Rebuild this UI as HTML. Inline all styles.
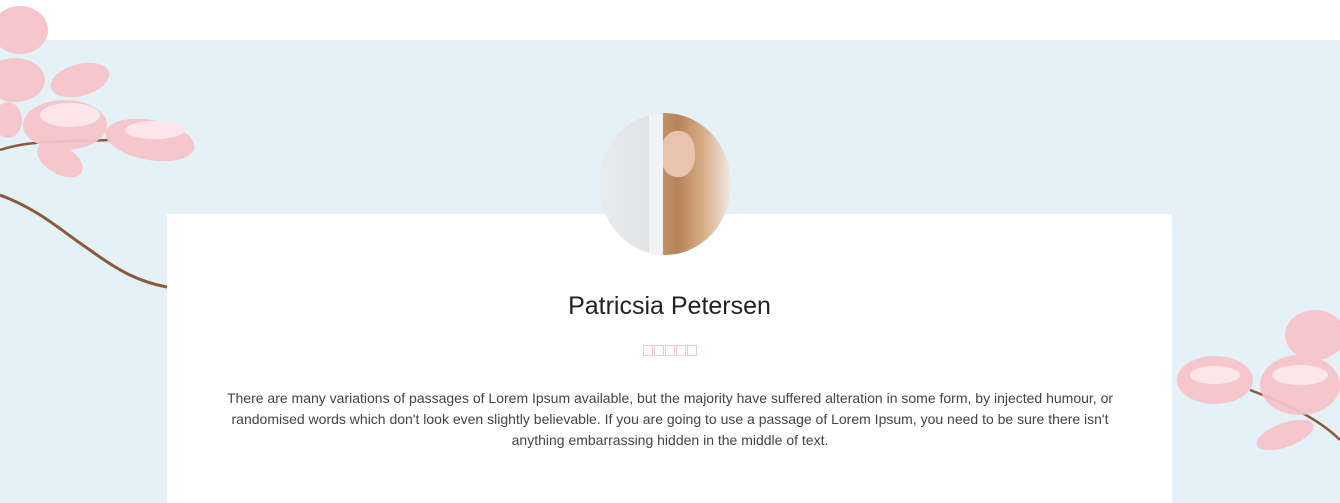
<!DOCTYPE html>
<html><head><meta charset="utf-8"><style>
html,body{margin:0;padding:0;width:1340px;height:503px;overflow:hidden;background:#fff;font-family:"Liberation Sans",sans-serif}
.band{position:absolute;left:0;top:40px;width:1340px;height:463px;background:#e4f2f8}
.card{position:absolute;left:167px;top:214px;width:1005px;height:289px;background:#fff}
.av{position:absolute;left:599px;top:113px;width:132px;height:142px;border-radius:50%;overflow:hidden;background:linear-gradient(90deg,#e9ecef 0%,#dfe3e6 38%,#c99a73 40%,#b8835a 60%,#d9b08a 80%,#efe9e4 100%)}
h2{position:absolute;left:167px;width:1005px;top:292px;margin:0;text-align:center;font-weight:normal;font-size:25px;color:#222}
.st{position:absolute;left:643px;top:345px;display:flex;gap:1px}
.st i{display:block;width:8px;height:9px;border:1px solid #f0c8c8}
p{position:absolute;left:215px;width:910px;top:388px;margin:0;text-align:center;font-size:14px;line-height:21px;color:#444}
svg{position:absolute}
</style></head><body>
<div class="band"></div>
<div class="card"></div>
<div class="av">
<div style="position:absolute;left:62px;top:18px;width:34px;height:46px;border-radius:45%;background:#e8c4ae"></div>
<div style="position:absolute;left:50px;top:0;width:14px;height:142px;background:#f2f3f4"></div>
</div>
<svg width="200" height="300" style="left:0;top:0">
<path d="M0 195 C40 210 60 230 90 250 C120 272 140 282 167 287" stroke="#8a5a3c" stroke-width="3" fill="none"/>
<path d="M0 150 C30 140 60 142 110 140" stroke="#8a5a3c" stroke-width="2.5" fill="none"/>
<g fill="#f6c4ca" opacity=".95">
<ellipse cx="20" cy="30" rx="28" ry="24"/><ellipse cx="15" cy="80" rx="30" ry="22"/>
<ellipse cx="80" cy="80" rx="30" ry="16" transform="rotate(-15 80 80)"/>
<ellipse cx="65" cy="125" rx="42" ry="25"/><ellipse cx="60" cy="160" rx="25" ry="14" transform="rotate(30 60 160)"/>
<ellipse cx="150" cy="140" rx="45" ry="20" transform="rotate(10 150 140)"/>
<ellipse cx="8" cy="120" rx="14" ry="18"/>
</g>
<g fill="#fce6e9"><ellipse cx="70" cy="115" rx="30" ry="12"/><ellipse cx="155" cy="130" rx="30" ry="9"/></g>
</svg>
<svg width="170" height="200" style="left:1170px;top:290px">
<path d="M80 100 C120 115 150 130 170 150" stroke="#8a5a3c" stroke-width="2.5" fill="none"/>
<g fill="#f6c4ca" opacity=".95">
<ellipse cx="45" cy="90" rx="38" ry="24"/><ellipse cx="130" cy="95" rx="40" ry="30"/>
<ellipse cx="145" cy="45" rx="30" ry="25"/><ellipse cx="115" cy="145" rx="30" ry="12" transform="rotate(-20 115 145)"/>
</g>
<g fill="#fce6e9"><ellipse cx="45" cy="85" rx="25" ry="9"/><ellipse cx="130" cy="85" rx="28" ry="10"/></g>
</svg>
<h2>Patricsia Petersen</h2>
<div class="st"><i></i><i></i><i></i><i></i><i></i></div>
<p>There are many variations of passages of Lorem Ipsum available, but the majority have suffered alteration in some form, by injected humour, or randomised words which don't look even slightly believable. If you are going to use a passage of Lorem Ipsum, you need to be sure there isn't anything embarrassing hidden in the middle of text.</p>
</body></html>
